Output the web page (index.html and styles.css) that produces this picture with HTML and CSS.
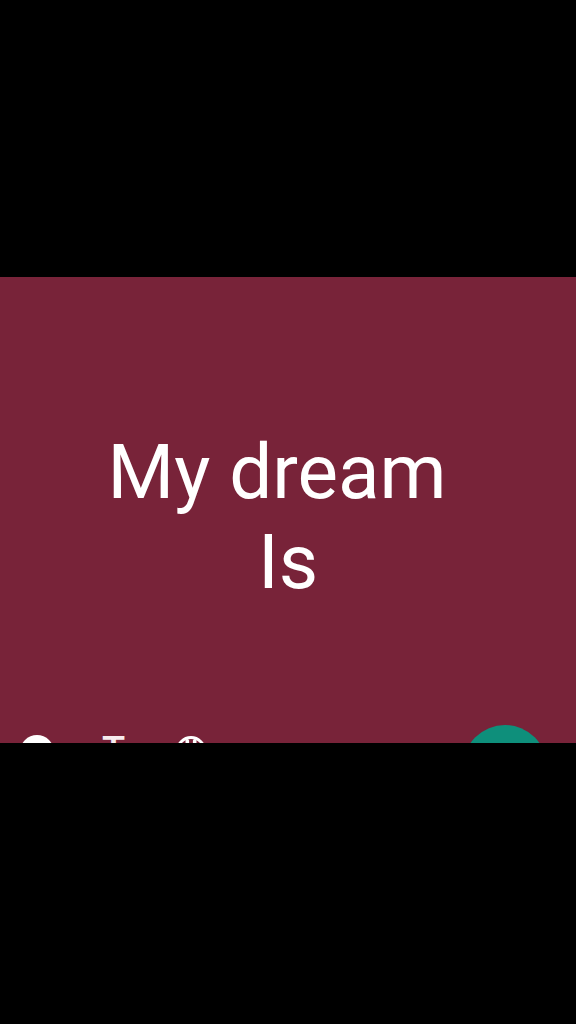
FILE: index.html
```html
<!DOCTYPE html>
<html lang="en">
<head>
<meta charset="utf-8">
<title>My dream Is</title>
<link rel="stylesheet" href="styles.css">
</head>
<body>
<main class="frame">
  <section class="panel">
    <div class="message">
      <p class="line line-first">My dream</p>
      <p class="line">Is</p>
    </div>
    <div class="toolbar">
      <span class="tool-dot"></span>
      <span class="tool-text">T</span>
      <svg class="tool-emoji" viewBox="0 0 30 30" aria-hidden="true">
        <circle cx="15" cy="15" r="13.5" fill="none" stroke="#fff" stroke-width="3"/>
        <rect x="9.5" y="3" width="3.6" height="8" rx="1.8" fill="#fff"/>
        <rect x="16.9" y="3" width="3.6" height="8" rx="1.8" fill="#fff"/>
      </svg>
      <span class="fab"></span>
    </div>
  </section>
</main>
</body>
</html>
```

FILE: styles.css
```css
html, body {
  margin: 0;
  padding: 0;
  height: 100%;
  background: #000;
}

.frame {
  height: 1024px;
  padding-top: 277px;
  box-sizing: border-box;
  overflow: hidden;
}

.panel {
  height: 466px;
  background: #782339;
  display: flex;
  flex-direction: column;
  overflow: hidden;
}

.message {
  flex: 1;
  padding-top: 150px;
  font-family: Roboto, "Liberation Sans", sans-serif;
  font-size: 76.4px;
  line-height: 90px;
  color: #fff;
  text-align: center;
}

.line {
  margin: 0;
}

.line-first {
  padding-right: 22px;
}

.toolbar {
  height: 18px;
  display: flex;
  align-items: flex-start;
  flex: none;
  padding-left: 20px;
}

.tool-dot {
  width: 34px;
  height: 34px;
  margin-top: 10px;
  border-radius: 50%;
  background: #fff;
  flex: none;
}

.tool-text {
  width: 23px;
  margin-left: 48px;
  margin-top: 7px;
  flex: none;
  font-family: Roboto, "Liberation Sans", sans-serif;
  font-size: 38px;
  font-weight: 500;
  line-height: 38px;
  text-align: center;
  color: #f6ecee;
}

.tool-emoji {
  width: 30px;
  height: 30px;
  margin-left: 51px;
  margin-top: 11px;
  flex: none;
}

.fab {
  width: 84px;
  height: 84px;
  margin-left: 257px;
  border-radius: 50%;
  background: #0e8f7b;
  flex: none;
}
```
